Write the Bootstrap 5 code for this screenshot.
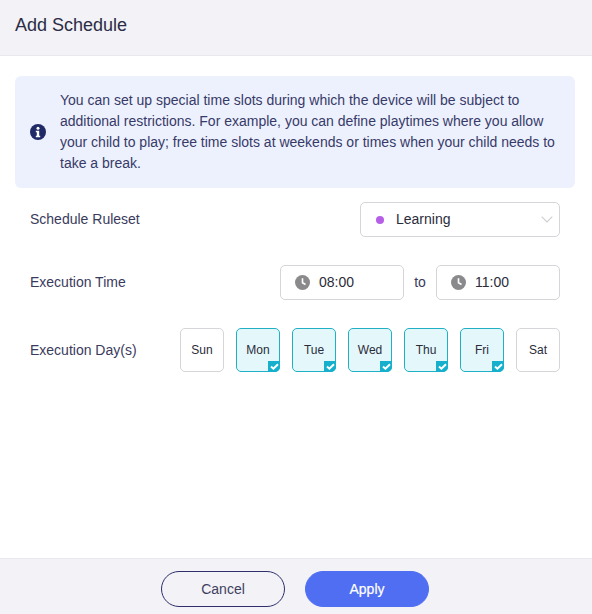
<!DOCTYPE html>
<html lang="en"><head><meta charset="utf-8"><title>Add Schedule</title>
<link href="https://cdn.jsdelivr.net/npm/bootstrap@5.3.0/dist/css/bootstrap.min.css" rel="stylesheet">
<style>
html,body{height:100%;margin:0}
body{font-family:"Liberation Sans",Arial,sans-serif;font-size:14px;color:#2e2f55;background:#fff;overflow:hidden}
.dlg{height:614px;width:592px}
.dlg-head{height:56px;background:#f2f2f7;border-bottom:1px solid #e8e8ee;padding:0 15px;font-size:18px;color:#2b2c45}
.dlg-body{padding:20px 17px 0 15px;flex:1 1 auto}
.note{background:#edf1fd;border-radius:6px;padding:14px 15px;line-height:21px;color:#373a68;height:112px}
.note-text{padding-left:14px}
.note-ico{width:16px;flex:0 0 16px;margin-top:-1px}
.field{padding:0 15px;height:35px;margin-bottom:28px}
.field-first{margin-top:14px}
.field-days{height:44px}
.lbl{color:#3a3b5c}
.pick{height:35px;border:1px solid #d5d5da;border-radius:5px;background:#fff;color:#2b2c3a}
.pick-sel{width:200px;padding:0 6px 0 15px}
.dot{width:8px;height:8px;border-radius:50%;background:#b45fe6;margin-right:12px}
.pick-time{width:124px;padding:0 14px}
.pick-time svg{margin-right:9px}
.to{width:32px;text-align:center;color:#3a3b5c}
.days{gap:12px}
.day{width:44px;height:44px;border:1px solid #d5d5da;border-radius:5px;font-size:12px;color:#2b2c3a}
.day-on{background:#e4f7fb;border-color:#1fb0c6}
.tick{position:absolute;right:-1px;bottom:-1px;width:12px;height:11px;background:#16b0cc;border-radius:0 0 5px 0;display:flex;align-items:center;justify-content:center}
.dlg-foot{height:56px;background:#f2f2f7;border-top:1px solid #e8e8ee;gap:20px;padding:4px 2px 0 0}
.act{width:124px;height:36px;border-radius:18px;font-size:14px;padding:0;line-height:34px}
.act-ghost{background:transparent;border:1px solid #2e2f6b;color:#3f4060}
.act-main{background:#4f6ef2;border:1px solid #4f6ef2;color:#fff;font-weight:400;-webkit-text-stroke:.2px #fff}
.act-ghost:hover{background:transparent;color:#3f4060;border-color:#2e2f6b}
.act-main:hover{background:#4f6ef2;color:#fff;border-color:#4f6ef2}
</style></head>
<body>
<div class="dlg d-flex flex-column">
  <div class="dlg-head d-flex align-items-center pb-1">Add Schedule</div>
  <div class="dlg-body">
    <div class="note d-flex align-items-center">
      <svg class="note-ico" viewBox="0 0 16 16" width="16" height="16"><circle cx="8" cy="8" r="8" fill="#1f2a66"/><circle cx="8" cy="4.3" r="1.5" fill="#fff"/><path d="M5.8 6.8h3.4v5h1v1.4H5.8v-1.4h1v-3.6h-1z" fill="#fff"/></svg>
      <div class="note-text">You can set up special time slots during which the device will be subject to additional restrictions. For example, you can define playtimes where you allow your child to play; free time slots at weekends or times when your child needs to take a break.</div>
    </div>
    <div class="field field-first d-flex align-items-center justify-content-between">
      <span class="lbl">Schedule Ruleset</span>
      <div class="pick pick-sel d-flex align-items-center">
        <span class="dot"></span><span>Learning</span>
        <svg class="ms-auto" width="12" height="7" viewBox="0 0 12 7"><path d="M.7.7 6 6 11.3.7" fill="none" stroke="#cfcfd3" stroke-width="1.1"/></svg>
      </div>
    </div>
    <div class="field d-flex align-items-center justify-content-between">
      <span class="lbl">Execution Time</span>
      <div class="d-flex align-items-center">
        <div class="pick pick-time d-flex align-items-center">
          <svg width="15" height="15" viewBox="0 0 15 15"><circle cx="7.5" cy="7.5" r="7.5" fill="#8a8a8c"/><path d="M7.5 3.2v4.5l3 1.8" fill="none" stroke="#fff" stroke-width="1.6"/></svg>08:00
        </div>
        <span class="to">to</span>
        <div class="pick pick-time d-flex align-items-center">
          <svg width="15" height="15" viewBox="0 0 15 15"><circle cx="7.5" cy="7.5" r="7.5" fill="#8a8a8c"/><path d="M7.5 3.2v4.5l3 1.8" fill="none" stroke="#fff" stroke-width="1.6"/></svg>11:00
        </div>
      </div>
    </div>
    <div class="field field-days d-flex align-items-center justify-content-between">
      <span class="lbl">Execution Day(s)</span>
      <div class="days d-flex">
        <div class="day d-flex align-items-center justify-content-center position-relative">Sun</div>
        <div class="day day-on d-flex align-items-center justify-content-center position-relative">Mon<span class="tick"><svg width="9" height="7" viewBox="0 0 9 7"><path d="M1 3.5 3.4 5.7 8 1.2" fill="none" stroke="#fff" stroke-width="2"/></svg></span></div>
        <div class="day day-on d-flex align-items-center justify-content-center position-relative">Tue<span class="tick"><svg width="9" height="7" viewBox="0 0 9 7"><path d="M1 3.5 3.4 5.7 8 1.2" fill="none" stroke="#fff" stroke-width="2"/></svg></span></div>
        <div class="day day-on d-flex align-items-center justify-content-center position-relative">Wed<span class="tick"><svg width="9" height="7" viewBox="0 0 9 7"><path d="M1 3.5 3.4 5.7 8 1.2" fill="none" stroke="#fff" stroke-width="2"/></svg></span></div>
        <div class="day day-on d-flex align-items-center justify-content-center position-relative">Thu<span class="tick"><svg width="9" height="7" viewBox="0 0 9 7"><path d="M1 3.5 3.4 5.7 8 1.2" fill="none" stroke="#fff" stroke-width="2"/></svg></span></div>
        <div class="day day-on d-flex align-items-center justify-content-center position-relative">Fri<span class="tick"><svg width="9" height="7" viewBox="0 0 9 7"><path d="M1 3.5 3.4 5.7 8 1.2" fill="none" stroke="#fff" stroke-width="2"/></svg></span></div>
        <div class="day d-flex align-items-center justify-content-center position-relative">Sat</div>
      </div>
    </div>
  </div>
  <div class="dlg-foot d-flex align-items-center justify-content-center">
    <button type="button" class="btn act act-ghost">Cancel</button>
    <button type="button" class="btn act act-main">Apply</button>
  </div>
</div>
<script src="https://cdn.jsdelivr.net/npm/bootstrap@5.3.0/dist/js/bootstrap.bundle.min.js"></script>
</body></html>
